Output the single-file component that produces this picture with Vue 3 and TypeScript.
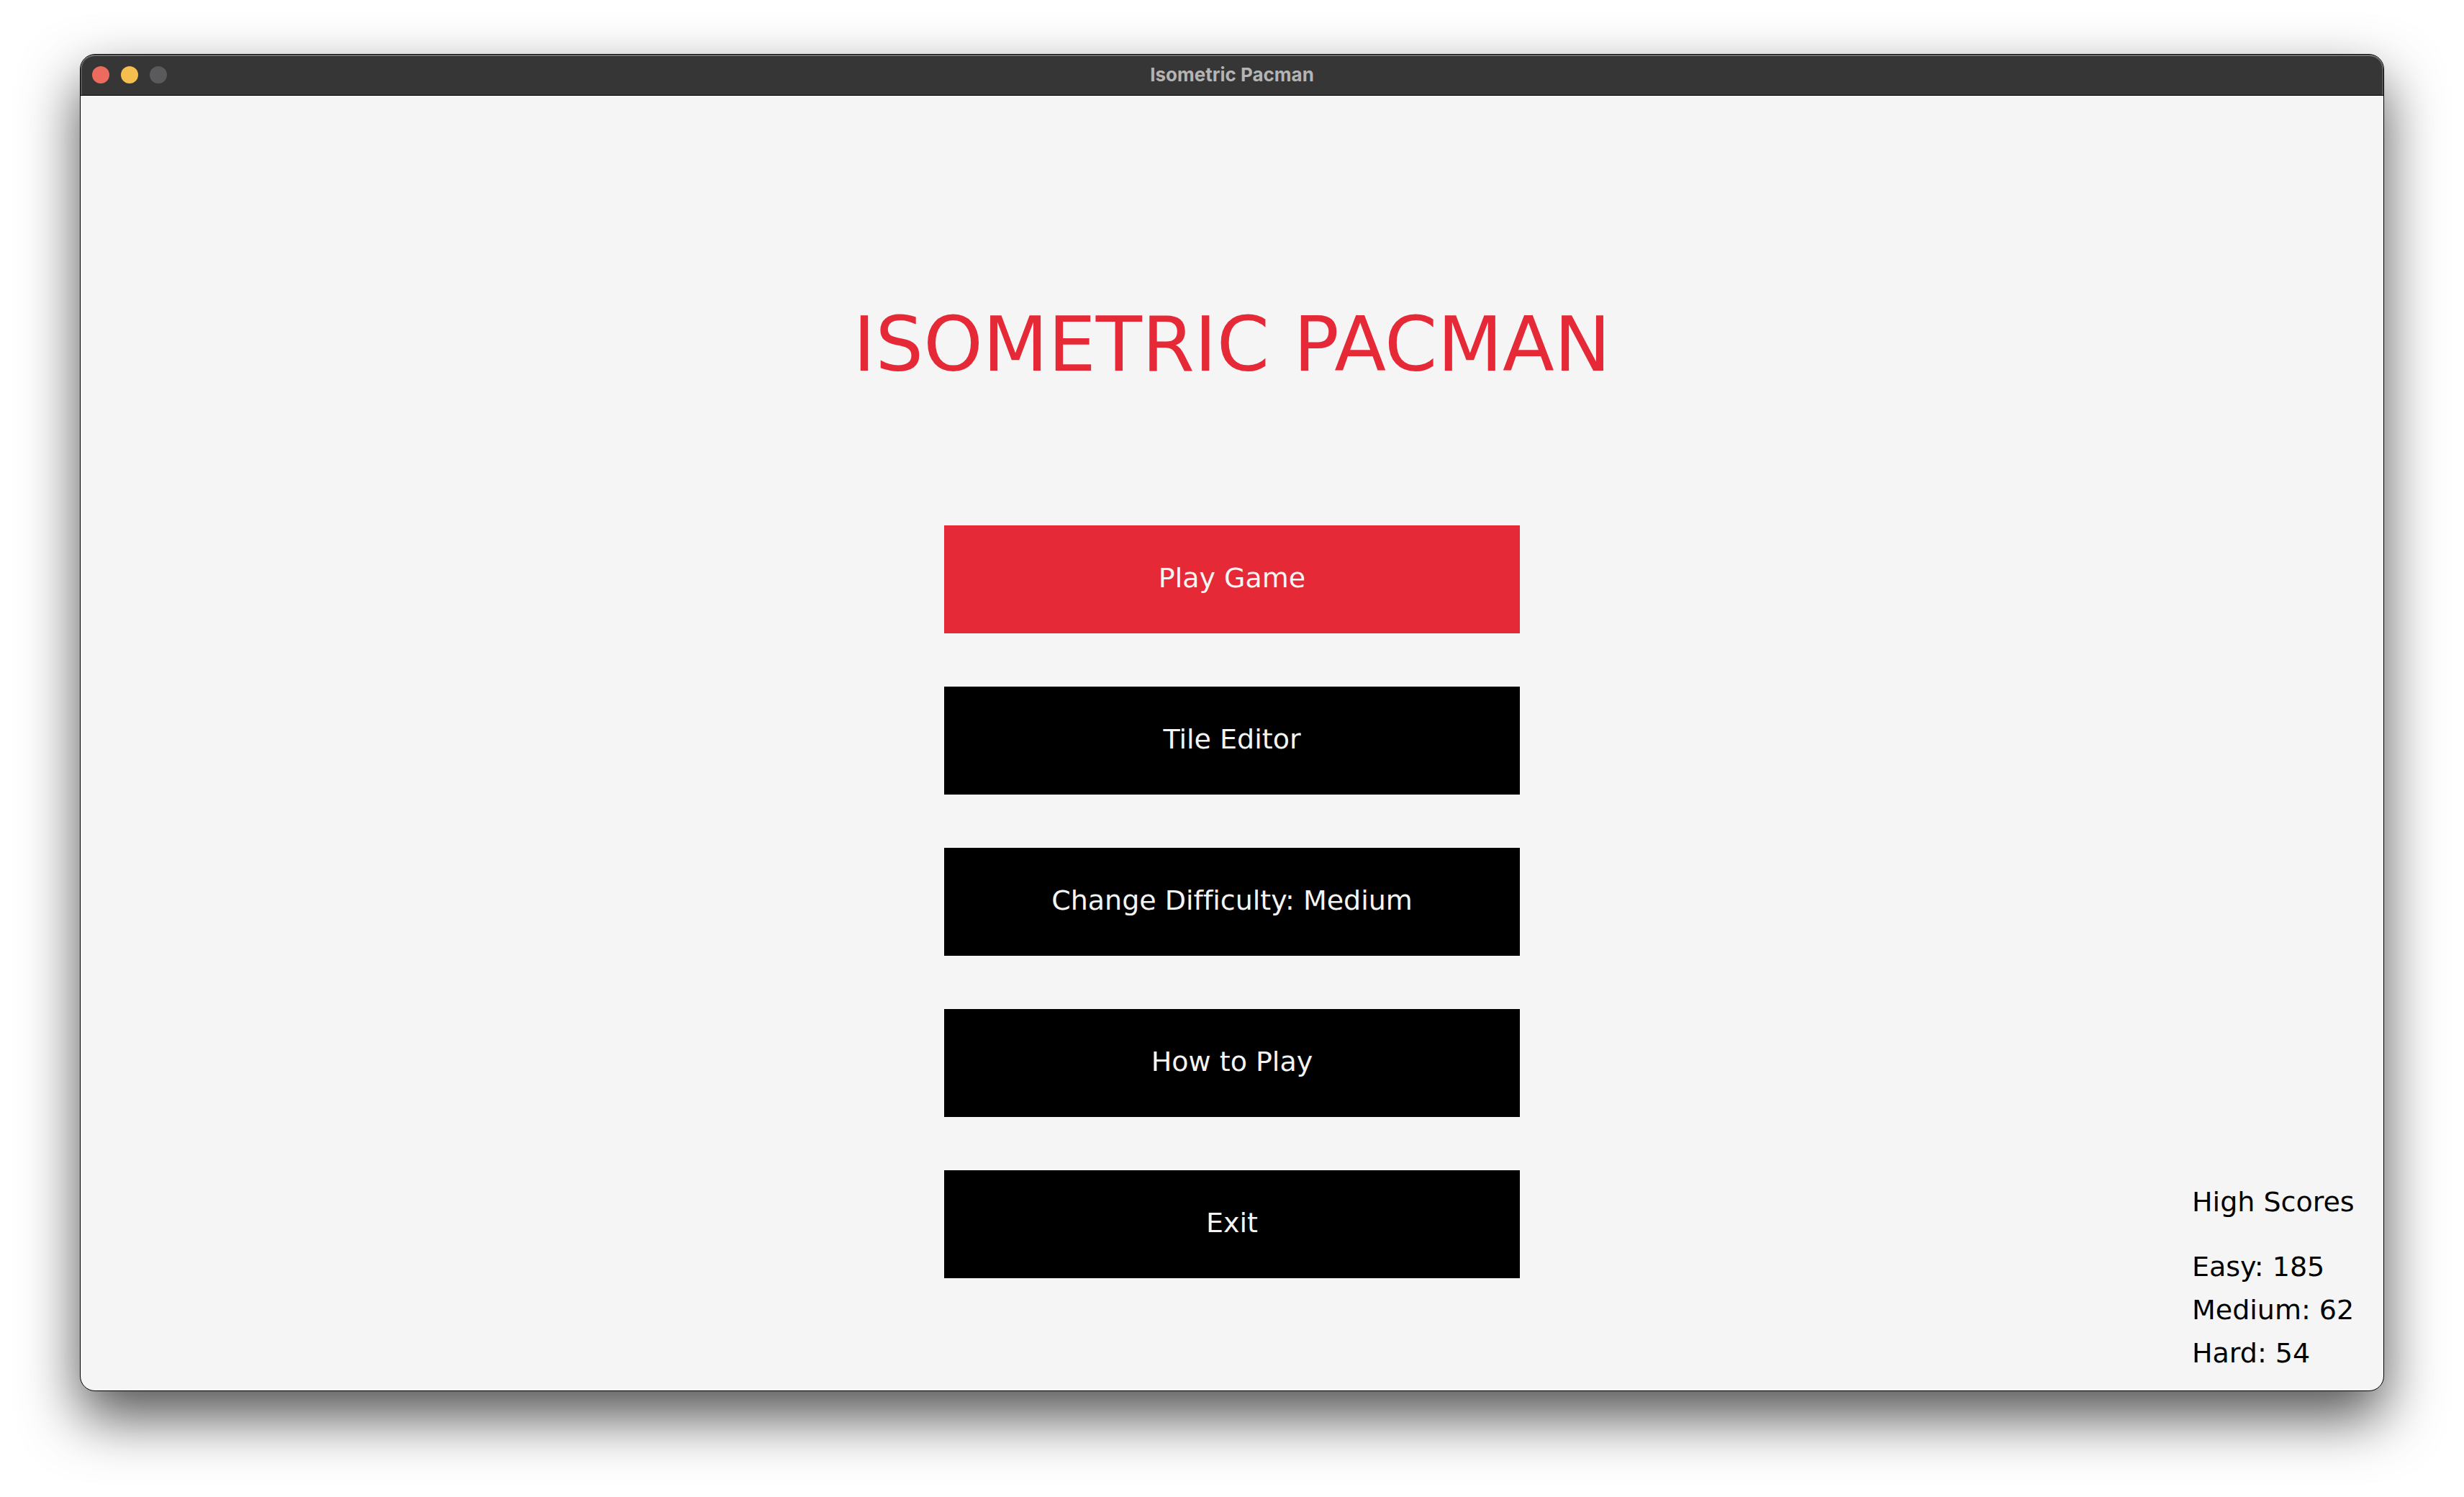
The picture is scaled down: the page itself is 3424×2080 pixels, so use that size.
<script setup lang="ts">
import { computed, ref } from 'vue'

interface MenuItem {
  id: string
  label: string
}

interface Score {
  level: string
  points: number
}

const levels = ['Easy', 'Medium', 'Hard']
const level = ref(1)
const selected = ref('play')

const items = computed<MenuItem[]>(() => [
  { id: 'play', label: 'Play Game' },
  { id: 'editor', label: 'Tile Editor' },
  { id: 'difficulty', label: `Change Difficulty: ${levels[level.value]}` },
  { id: 'help', label: 'How to Play' },
  { id: 'exit', label: 'Exit' },
])

const scores: Score[] = [
  { level: 'Easy', points: 185 },
  { level: 'Medium', points: 62 },
  { level: 'Hard', points: 54 },
]

function choose(id: string): void {
  selected.value = id
  if (id === 'difficulty') level.value = (level.value + 1) % levels.length
}
</script>

<template>
  <div class="desktop">
    <div class="window">
      <header class="titlebar">
        <div class="lights">
          <button class="light close" type="button" aria-label="Close"></button>
          <button class="light minimise" type="button" aria-label="Minimise"></button>
          <button class="light zoom" type="button" aria-label="Zoom" disabled></button>
        </div>
        <span class="caption">Isometric Pacman</span>
      </header>

      <main class="game">
        <section class="centre">
          <h1 class="title">ISOMETRIC PACMAN</h1>
          <nav class="menu">
            <button
              v-for="item in items"
              :key="item.id"
              type="button"
              class="choice"
              :class="{ active: item.id === selected }"
              @click="choose(item.id)"
            >{{ item.label }}</button>
          </nav>
        </section>

        <aside class="scores">
          <h2 class="scores-title">High Scores</h2>
          <ul class="score-list">
            <li v-for="score in scores" :key="score.level">{{ score.level }}: {{ score.points }}</li>
          </ul>
        </aside>
      </main>
    </div>
  </div>
</template>

<style>
body {
  margin: 0;
  background: #ffffff;
}
</style>

<style scoped>
.desktop {
  padding: 75px 111px 147px;
  overflow: hidden;
}

.window {
  border: 1px solid #000000;
  border-radius: 21px;
  background: #f5f5f5;
  box-shadow: 0 36px 80px rgba(0, 0, 0, 0.68);
}

.titlebar {
  display: grid;
  grid-template-columns: 1fr auto 1fr;
  align-items: center;
  height: 56px;
  padding: 0 16px;
  border-bottom: 1px solid #000000;
  border-radius: 20px 20px 0 0;
  background: #363636;
  box-shadow: inset 0 2px 0 #6e6e6e, inset 2px 0 0 #555555, inset -2px 0 0 #555555;
}

.lights {
  display: flex;
  gap: 16px;
}

.light {
  width: 24px;
  height: 24px;
  padding: 0;
  border: 0;
  border-radius: 50%;
}

.close {
  background: #ed6a5f;
}

.minimise {
  background: #f5bf4f;
}

.zoom {
  background: #5a5a5c;
}

.caption {
  grid-column: 2;
  font: 700 26px/32px Inter, sans-serif;
  color: #b4b4b4;
}

.game {
  display: grid;
  grid-template-columns: 1fr auto 1fr;
  font-family: "DejaVu Sans", sans-serif;
  font-size: 38px;
  line-height: 60px;
}

.centre {
  grid-column: 2;
  display: flex;
  flex-direction: column;
  align-items: center;
  padding: 286px 0 156px;
}

.title {
  margin: 0 0 191px;
  font-size: 105px;
  font-weight: 400;
  line-height: 120px;
  white-space: nowrap;
  color: #e62937;
}

.menu {
  display: flex;
  flex-direction: column;
  gap: 74px;
  width: 800px;
}

.choice {
  height: 150px;
  padding: 0 0 4px;
  border: 0;
  background: #000000;
  color: #f5f5f5;
  font: inherit;
  font-variant-ligatures: none;
}

.choice.active {
  background: #e62937;
}

.scores {
  align-self: end;
  justify-self: end;
  min-width: 246px;
  padding: 0 20px 22px 0;
  color: #000000;
}

.scores-title {
  margin: 0 0 30px;
  font: inherit;
}

.score-list {
  margin: 0;
  padding: 0;
  list-style: none;
}
</style>
